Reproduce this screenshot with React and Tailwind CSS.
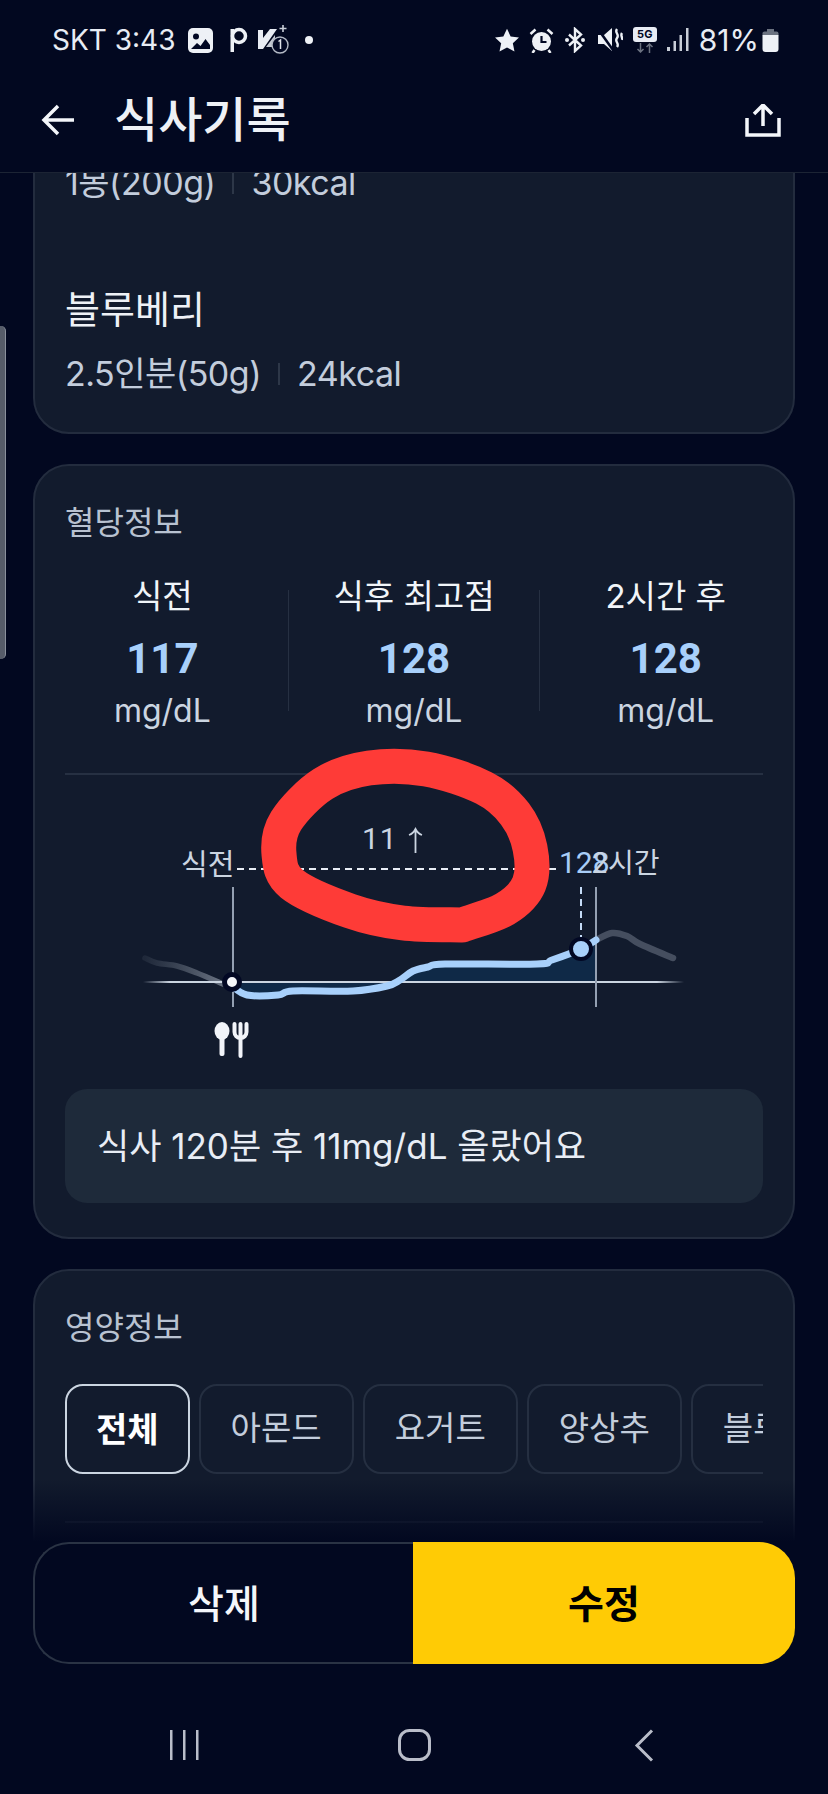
const smooth = (p) => {
  let d = `M${p[0][0]} ${p[0][1]}`;
  for (let i = 0; i < p.length - 1; i++) {
    const a = p[Math.max(i - 1, 0)], b = p[i], c = p[i + 1], e = p[Math.min(i + 2, p.length - 1)];
    d += ` C${b[0] + (c[0] - a[0]) / 6} ${b[1] + (c[1] - a[1]) / 6} ${c[0] - (e[0] - b[0]) / 6} ${c[1] - (e[1] - b[1]) / 6} ${c[0]} ${c[1]}`;
  }
  return d;
};

const blue = [[232, 985], [247, 994], [278, 994], [293, 990], [353, 990], [387, 985], [400, 979], [413, 970], [428, 966], [445, 963], [537, 963], [552, 959], [581, 948], [596, 939]];
const before = [[145, 957], [157, 962], [177, 965], [197, 972], [223, 983]];
const after = [[596, 939], [612, 932], [627, 935], [640, 943], [673, 957]];
const scribble = [[462, 924], [505, 908], [529, 883], [530, 847], [515, 813], [484, 787], [426, 768], [369, 767], [323, 783], [286, 820], [279, 853], [292, 883], [350, 910], [403, 922], [462, 924]];

function Chart() {
  return (
    <div className="relative h-[314px] w-full">
      <svg className="absolute left-0 top-0 overflow-visible" width="698" height="314" viewBox="65 774 698 314" fill="none">
        <defs>
          <linearGradient id="base" x1="143" x2="684" y1="0" y2="0" gradientUnits="userSpaceOnUse">
            <stop offset="0" stopColor="#cbd5e1" stopOpacity="0" />
            <stop offset="0.05" stopColor="#cbd5e1" />
            <stop offset="0.95" stopColor="#cbd5e1" />
            <stop offset="1" stopColor="#cbd5e1" stopOpacity="0" />
          </linearGradient>
          <linearGradient id="fadeL" x1="145" x2="223" y1="0" y2="0" gradientUnits="userSpaceOnUse">
            <stop offset="0" stopColor="#56606f" stopOpacity="0.2" />
            <stop offset="1" stopColor="#6b7483" />
          </linearGradient>
        </defs>
        <path d={smooth(blue) + " L596 981 L232 981 Z"} fill="#0f2947" />
        <path d={smooth(before)} stroke="url(#fadeL)" strokeWidth="5.500" strokeLinecap="round" />
        <path d={smooth(after)} stroke="#454e5f" strokeWidth="6.500" strokeLinecap="round" />
        <rect x="143" y="980" width="541" height="2" fill="url(#base)" />
        <rect x="232" y="886" width="2" height="120" fill="#94a0b2" />
        <rect x="595" y="886" width="2" height="120" fill="#94a0b2" />
        <path d={smooth(blue)} stroke="#a8d0fb" strokeWidth="7" strokeLinecap="round" />
        <line x1="237" y1="868" x2="556" y2="868" stroke="#e8edf5" strokeWidth="2" strokeDasharray="7 5" />
        <line x1="581" y1="886" x2="581" y2="936" stroke="#c5dcf8" strokeWidth="2" strokeDasharray="7 5" />
        <circle cx="232" cy="981" r="7.500" fill="#f4f6fa" stroke="#020824" strokeWidth="5" />
        <circle cx="581" cy="948" r="10" fill="#a8d0fb" stroke="#020824" strokeWidth="4" />
        <ellipse cx="222" cy="1030" rx="7.500" ry="9" fill="#f1f4f9" />
        <rect x="219.500" y="1034" width="5" height="21" rx="2" fill="#f1f4f9" />
        <path d="M234.500 1023v8a6 6 0 0 0 12 0v-8M240.500 1023v32" stroke="#f1f4f9" strokeWidth="4" strokeLinecap="round" />
        <path d="M415.500 828v24M409 834c3-1 5-3 6.500-6c1.500 3 3.500 5 6.500 6" stroke="#cbd5e1" strokeWidth="1.800" />
      </svg>
      <span className="absolute left-[116px] top-[71px] text-[29px] leading-[38px] text-[#cbd5e1]">식전</span>
      <span className="absolute left-[297px] top-[45px] font-['Roboto'] text-[30px] leading-[38px] tracking-[1px] text-[#cbd5e1]">11</span>
      <span className="absolute left-[494px] top-[69px] font-['Roboto'] text-[30px] leading-[38px] text-[#a8cdf7]">128</span>
      <span className="absolute left-[526px] top-[69px] text-[28px] leading-[38px] text-[#cbd5e1]">2시간</span>
      <svg className="pointer-events-none absolute left-0 top-0 overflow-visible" width="698" height="314" viewBox="65 774 698 314" fill="none">
        <path d={smooth(scribble)} stroke="#fe3b37" strokeWidth="35" strokeLinecap="round" strokeLinejoin="round" />
      </svg>
    </div>
  );
}

function Stat({ label, value }) {
  return (
    <div className="flex-1 text-center">
      <div className="h-[40px] text-[33px] leading-[40px] text-[#f1f5f9]">{label}</div>
      <div className="mt-[18px] h-[50px] font-['Roboto'] text-[42px] font-bold leading-[50px] text-[#a8d0fb]">{value}</div>
      <div className="mt-[7px] h-[40px] text-[32px] leading-[40px] text-[#cbd5e1]">mg/dL</div>
    </div>
  );
}

function Sep() {
  return <div className="mt-[14px] h-[121px] w-px shrink-0 bg-[#263042]" />;
}

function Sub({ amount, kcal }) {
  return (
    <div className="flex h-[44px] items-center text-[34px] leading-[44px] tracking-[-0.5px] text-[#c3cddc]">
      <span>{amount}</span>
      <span className="mx-[17px] h-[22px] w-[2px] bg-[#2d3748]" />
      <span>{kcal}</span>
    </div>
  );
}

const cardClass = "rounded-[36px] border-2 border-[#232c3e] bg-[#121b2d] px-[30px]";

function Tab({ children, active }) {
  return (
    <div className={active
      ? "flex h-[90px] shrink-0 items-center rounded-[18px] border-2 border-[#cbd5e1] px-[29px] text-[34px] font-bold text-white"
      : "flex h-[90px] shrink-0 items-center rounded-[18px] border-2 border-[#252f41] px-[30px] text-[33px] text-[#c3cddc]"}>
      {children}
    </div>
  );
}

function StatusLeft() {
  return (
    <div className="flex items-center">
      <span className="text-[28px] leading-[34px] text-[#e8ecf4]">SKT 3:43</span>
      <svg className="ml-[13px]" width="25" height="25" viewBox="0 0 25 25">
        <rect width="25" height="25" rx="5" fill="#eef1f6" />
        <circle cx="8" cy="8.500" r="3" fill="#020824" />
        <path d="M3 21l6-6 3.500 3 5-7 4.500 6v4z" fill="#020824" />
      </svg>
      <svg className="ml-[16px]" width="19" height="26" viewBox="0 0 19 26" fill="none">
        <circle cx="10" cy="9" r="6.500" stroke="#eef1f6" strokeWidth="3.500" />
        <rect x="1.500" y="2" width="3.500" height="23" fill="#eef1f6" />
      </svg>
      <svg className="ml-[10px]" width="32" height="30" viewBox="0 0 32 30" fill="none">
        <path d="M0 5h5v8L12 4h7L5 24H0z" fill="#e8ecf4" />
        <path d="M8 22l9-12v12z" fill="#e8ecf4" opacity="0.85" />
        <path d="M25 0v7M21.500 3.500h7" stroke="#c9ced8" strokeWidth="1.600" />
        <circle cx="22" cy="20" r="8" fill="#020824" stroke="#b4bac6" strokeWidth="1.400" />
        <path d="M20.500 16.500l2-1.500v9" stroke="#dfe3ea" strokeWidth="1.500" fill="none" />
      </svg>
      <svg className="ml-[15px]" width="8" height="8" viewBox="0 0 8 8"><circle cx="4" cy="4" r="4" fill="#eef1f6" /></svg>
    </div>
  );
}

function StatusRight() {
  return (
    <div className="flex items-center">
      <svg width="26" height="25" viewBox="0 0 24 24"><path d="M12 0.800l3.500 7.300 8 1-5.900 5.500 1.600 8L12 18.600l-7.200 4 1.600-8L.5 9.100l8-1z" fill="#eef1f6" /></svg>
      <svg className="ml-[9px]" width="25" height="25" viewBox="0 0 24 25" fill="none">
        <circle cx="12" cy="13.500" r="9.500" fill="#eef1f6" />
        <path d="M12 8v6h5" stroke="#020824" strokeWidth="2.200" />
        <path d="M1 6l5-4.500M23 6l-5-4.500M5 22l-2 3M19 22l2 3" stroke="#eef1f6" strokeWidth="2.500" />
      </svg>
      <svg className="ml-[10px]" width="22" height="26" viewBox="0 0 22 26" fill="none" stroke="#eef1f6" strokeWidth="2.400">
        <path d="M11 13V2l6 5.500L5 18.500M11 13v11l6-5.500L5 7.500" />
        <circle cx="3" cy="13" r="2" fill="#eef1f6" stroke="none" />
        <circle cx="19" cy="13" r="2" fill="#eef1f6" stroke="none" />
      </svg>
      <svg className="ml-[12px]" width="25" height="26" viewBox="0 0 25 26" fill="none">
        <path d="M0 8h6l8-7v23l-8-7H0z" fill="#eef1f6" />
        <path d="M0 2l15 21" stroke="#020824" strokeWidth="2.500" />
        <path d="M19 2c-3 4 3 5 0 9s3 5 0 9M24 6c-2 3 1 4 0 7" stroke="#eef1f6" strokeWidth="2.400" />
      </svg>
      <div className="ml-[10px] flex w-[24px] flex-col items-center">
        <span className="flex h-[15px] w-[24px] items-center justify-center rounded-[3px] bg-[#e8ecf4] text-[11px] font-bold leading-none text-[#020824]">5G</span>
        <svg className="mt-[1px]" width="20" height="10" viewBox="0 0 20 10" fill="none" stroke="#6b7280" strokeWidth="1.500">
          <path d="M5.500 0v9M2.500 6l3 3 3-3M14.500 10V1M11.500 4l3-3 3 3" />
        </svg>
      </div>
      <svg className="ml-[10px]" width="22" height="24" viewBox="0 0 22 24" fill="#c9ced8">
        <rect x="0" y="19" width="3" height="4" /><rect x="6.500" y="13" width="2.500" height="10" /><rect x="12.500" y="7" width="2.500" height="16" /><rect x="19" y="0" width="2.500" height="23" />
      </svg>
      <span className="ml-[10px] text-[30px] leading-[34px] text-[#e8ecf4]">81%</span>
      <svg className="ml-[3px]" width="17" height="23" viewBox="0 0 16 23">
        <rect x="4.500" y="0" width="7" height="3" fill="#6b7280" />
        <rect x="0" y="2.500" width="16" height="5" rx="2" fill="#6b7280" />
        <path d="M0 6h16v14a3 3 0 0 1-3 3H3a3 3 0 0 1-3-3z" fill="#eef1f6" />
      </svg>
    </div>
  );
}

export default function App() {
  return (
    <div className="relative flex h-[1794px] w-[828px] flex-col overflow-hidden bg-[#020820] font-['Inter','Noto_Sans_CJK_KR',sans-serif]">
      <header className="relative z-10 h-[173px] shrink-0 border-b border-[#1c2434] bg-[#020820]">
        <div className="flex h-[80px] items-center justify-between pl-[52px] pr-[49px]">
          <StatusLeft />
          <StatusRight />
        </div>
        <div className="flex h-[80px] items-center justify-between pl-[41px] pr-[47px]">
          <div className="flex items-center">
            <svg width="33" height="32" viewBox="0 0 33 32" fill="none" stroke="#f4f6fa" strokeWidth="3.500">
              <path d="M33 16H3M17 2L3 16l14 14" />
            </svg>
            <span className="ml-[40px] text-[48px] font-medium leading-[56px] text-[#eef1f6]">식사기록</span>
          </div>
          <svg width="36" height="33" viewBox="0 0 36 33" fill="none" stroke="#f4f6fa" strokeWidth="3.500">
            <path d="M18 22V2M9 10l9-9 9 9M2 14v17h32V14" />
          </svg>
        </div>
      </header>

      <main className="flex-1 overflow-hidden px-[33px]">
        <section className={cardClass + " -mt-[60px] pb-[36px] pt-[46px]"}>
          <Sub amount="1봉(200g)" kcal="30kcal" />
          <div className="mt-[82px] h-[44px] text-[38px] leading-[44px] text-[#eef1f6]">블루베리</div>
          <div className="mt-[21px]"><Sub amount="2.5인분(50g)" kcal="24kcal" /></div>
        </section>

        <section className={cardClass + " mt-[30px] pb-[34px] pt-[37px]"}>
          <div className="h-[40px] text-[32px] leading-[40px] text-[#b8c2d1]">혈당정보</div>
          <div className="-mx-[28px] mt-[33px] flex">
            <Stat label="식전" value="117" />
            <Sep />
            <Stat label="식후 최고점" value="128" />
            <Sep />
            <Stat label="2시간 후" value="128" />
          </div>
          <div className="mt-[42px] h-[2px] bg-[#263042]" />
          <Chart />
          <div className="flex h-[114px] items-center rounded-[22px] bg-[#1e2a3a] px-[32px] text-[35px] text-[#e8edf5]">
            식사 120분 후 11mg/dL 올랐어요
          </div>
        </section>

        <section className={cardClass + " mt-[30px] pt-[37px]"}>
          <div className="h-[40px] text-[32px] leading-[40px] text-[#b8c2d1]">영양정보</div>
          <div className="mt-[36px] flex gap-[9px] overflow-hidden">
            <Tab active>전체</Tab>
            <Tab>아몬드</Tab>
            <Tab>요거트</Tab>
            <Tab>양상추</Tab>
            <Tab>블루베리</Tab>
          </div>
          <div className="mt-[47px] h-[2px] bg-[#263042]" />
          <div className="h-[300px]" />
        </section>
      </main>

      <div className="absolute inset-x-0 bottom-0">
        <div className="h-[63px] bg-gradient-to-b from-[#02082000] to-[#020820]" />
        <div className="bg-[#020820] px-[33px]">
          <div className="flex h-[122px] text-[39px] leading-none">
            <button className="flex w-[380px] items-center justify-center rounded-l-[36px] border-2 border-r-0 border-[#2a3344] font-medium text-[#f4f6fa]">삭제</button>
            <button className="flex flex-1 items-center justify-center rounded-r-[36px] bg-[#ffcb05] font-bold text-black">수정</button>
          </div>
          <div className="-mx-[33px] grid grid-cols-3 px-[69px] pb-[32px] pt-[65px]">
            <svg className="justify-self-center" width="30" height="32" viewBox="0 0 30 32" fill="#b9bdc9">
              <rect x="1" y="1" width="2.500" height="30" /><rect x="14" y="1" width="2.500" height="30" /><rect x="27" y="1" width="2.500" height="30" />
            </svg>
            <svg className="justify-self-center" width="33" height="32" viewBox="0 0 33 32" fill="none">
              <rect x="1.500" y="1.500" width="30" height="29" rx="10" stroke="#b9bdc9" strokeWidth="3" />
            </svg>
            <svg className="justify-self-center" width="20" height="33" viewBox="0 0 20 33" fill="none">
              <path d="M18 1.500L3 16.500l15 15" stroke="#b9bdc9" strokeWidth="3" />
            </svg>
          </div>
        </div>
      </div>

      <div className="absolute left-0 top-[326px] h-[333px] w-[6px] rounded-r-[5px] border-r border-[#8a909c] bg-[#565c69]" />
    </div>
  );
}
